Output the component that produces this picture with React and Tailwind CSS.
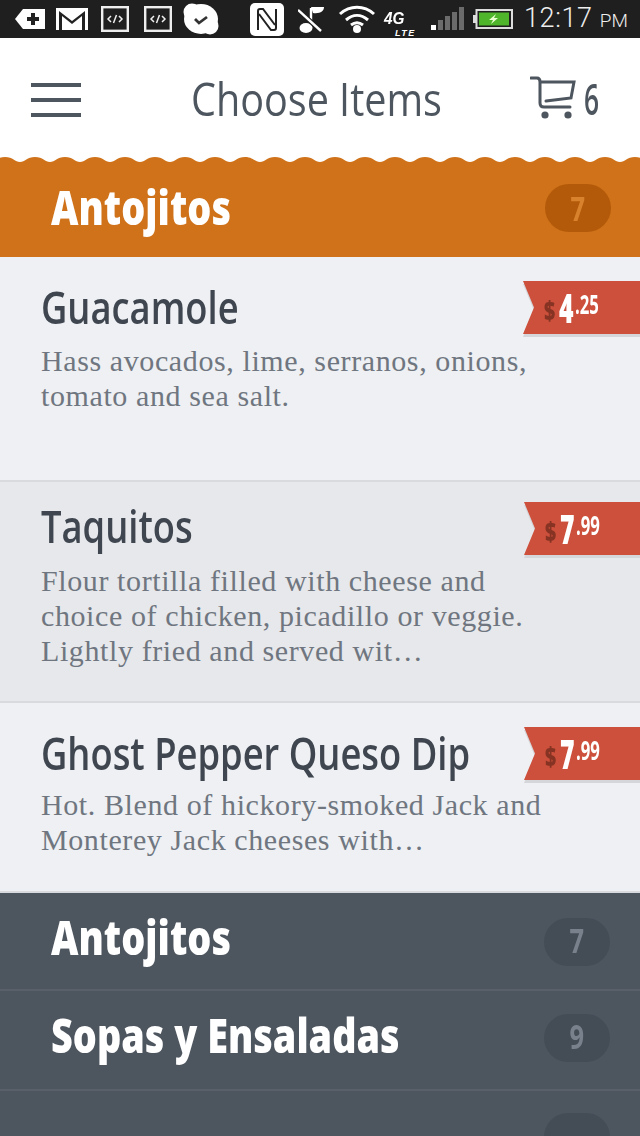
import React from 'react';

// scalloped top edge of the open category, one crest every 30px
const WAVE = 'M-25 0 ' + Array.from({ length: 23 }, (_, i) => {
  const x = i * 30 - 25;
  return `C${x + 8} 0 ${x + 10} 5 ${x + 15} 5 S${x + 22} 0 ${x + 30} 0`;
}).join(' ') + ' V6 H-25 Z';

const CodeBox = ({ className }) => (
  <svg width="28" height="26" viewBox="0 0 28 26" className={className}>
    <rect x="1.2" y="1.2" width="25.6" height="23.6" fill="none" stroke="#eee" strokeWidth="2.4" />
    <path d="M10 10 L7 13 L10 16 M18 10 L21 13 L18 16 M15.5 9 L12.5 17" fill="none" stroke="#eee" strokeWidth="1.5" />
  </svg>
);

const StatusIcons = () => (
  <div className="flex h-full items-center">
    <svg width="32" height="24" viewBox="0 0 32 24" className="ml-[14px]">
      <path d="M1 12 L9 2 H31 V22 H9 Z" fill="#fff" />
      <path d="M17 6 h4 v4 h4 v4 h-4 v4 h-4 v-4 h-4 v-4 h4 z" fill="#222" />
    </svg>
    <svg width="32" height="22" viewBox="0 0 32 22" className="ml-[10px]">
      <rect x="0" y="0" width="32" height="22" fill="#fff" />
      <path d="M3 22 V3 L16 13 L29 3 V22 H26 V8 L16 16 L6 8 V22 Z" fill="#222" />
    </svg>
    <CodeBox className="ml-[13px]" />
    <CodeBox className="ml-[15px]" />
    <svg width="36" height="32" viewBox="0 0 36 32" className="ml-[11px]">
      <ellipse cx="18" cy="16" rx="17" ry="15" fill="#fff" />
      <circle cx="9" cy="9" r="8.5" fill="#fff" />
      <circle cx="27" cy="23" r="8.5" fill="#fff" />
      <path d="M12 16 L16 20 L24 14" fill="none" stroke="#333" strokeWidth="2.8" />
    </svg>
    <svg width="34" height="33" viewBox="0 0 34 33" className="ml-[31px]">
      <rect x="0" y="0" width="34" height="33" rx="5" fill="#fff" />
      <path d="M8 27 V8 Q8 6 10 6 H13 L25 22" fill="none" stroke="#222" strokeWidth="2" />
      <path d="M26 6 V25 Q26 27 24 27 H21 L9 11" fill="none" stroke="#222" strokeWidth="2" />
    </svg>
    <svg width="28" height="27" viewBox="0 0 28 27" className="ml-[14px]">
      <path d="M13 2 V22" stroke="#fff" strokeWidth="2.4" />
      <path d="M13 1 H26 C26 5 22 8 15 7 Z" fill="#fff" />
      <ellipse cx="8" cy="22" rx="6.5" ry="5" fill="#fff" />
      <path d="M0 4 L23 25" stroke="#1f1f1f" strokeWidth="5" />
      <path d="M0 4 L23 25" stroke="#fff" strokeWidth="2.4" />
    </svg>
    <svg width="38" height="28" viewBox="0 0 38 28" className="ml-[12px]">
      <path d="M2 9 C12 0 26 0 36 9 M8 15 C15 9 23 9 30 15 M13 20 C17 17 21 17 25 20" fill="none" stroke="#fff" strokeWidth="3" />
      <circle cx="19" cy="24" r="4" fill="#fff" />
    </svg>
    <div className="relative ml-[8px] h-[38px] w-[36px] font-['Liberation_Sans',sans-serif] font-bold italic text-white">
      <span className="absolute left-0 top-[10px] origin-left scale-x-[0.9] text-[17px] leading-[17px]">4G</span>
      <span className="absolute left-[11px] top-[29px] text-[9px] leading-[8px] tracking-[1.5px]">LTE</span>
    </div>
    <svg width="34" height="24" viewBox="0 0 34 24" className="ml-[11px]">
      <rect x="0" y="18" width="5" height="5" fill="#fff" />
      <rect x="7" y="13" width="5" height="10" fill="#6b6b6b" />
      <rect x="14" y="9" width="5" height="14" fill="#6b6b6b" />
      <rect x="21" y="5" width="5" height="18" fill="#6b6b6b" />
      <rect x="28" y="0" width="5" height="23" fill="#6b6b6b" />
    </svg>
    <svg width="40" height="20" viewBox="0 0 40 20" className="ml-[8px]">
      <rect x="0" y="6" width="3" height="8" fill="#ddd" />
      <rect x="3.5" y="1" width="35.5" height="18" fill="none" stroke="#ddd" strokeWidth="2" />
      <rect x="6" y="3.5" width="30" height="13" fill="#4fb52a" />
      <path d="M23 5 L16 11 H20 L18 15 L25 9 H21 Z" fill="#e9ffd0" />
    </svg>
    <div className="ml-[11px] whitespace-nowrap font-['Roboto',sans-serif] text-[27px] font-light leading-[38px] tracking-[0.6px] text-[#eeeeee]">
      12:17 <span className="text-[19px] tracking-normal">PM</span>
    </div>
  </div>
);

const CartIcon = () => (
  <svg width="46" height="44" viewBox="0 0 46 44" fill="none" stroke="#4d555f" strokeLinecap="round">
    <path d="M1 2 H7 C9 2 10 4 10 6 V27 C10 29 11 31 14 31 H40" strokeWidth="3" />
    <path d="M11 6 H44 L41 22 L16 25" strokeWidth="3" />
    <circle cx="15" cy="39" r="3.6" fill="#4d555f" stroke="none" />
    <circle cx="38" cy="39" r="3.6" fill="#4d555f" stroke="none" />
  </svg>
);

const Price = ({ dollars, cents, className }) => (
  <div className={`absolute right-0 drop-shadow-[0_3px_0_#d5d6d9] ${className}`}>
    <div className="flex h-[53px] items-center bg-[#cc503b] pl-[21px] [clip-path:polygon(0_0,100%_0,100%_100%,0_100%,11px_50%)]">
      <span className="mt-[3px] inline-block w-[15px] origin-left scale-x-[0.72] font-['Open_Sans',sans-serif] text-[27px] font-extrabold leading-none text-[#873324]">$</span>
      <span className="inline-block w-[16px] origin-left scale-x-[0.62] font-['Open_Sans',sans-serif] text-[40px] font-extrabold leading-none text-white">{dollars}</span>
      <span className="-mt-[9px] inline-block origin-left scale-x-[0.62] font-['Open_Sans',sans-serif] text-[27px] font-bold leading-none text-white">.{cents}</span>
    </div>
  </div>
);

const Item = ({ title, lines, dollars, cents, priceClass, className, titleClass, bodyClass }) => (
  <div className={`relative border-b-2 border-[#d9dadd] pl-[41px] ${className}`}>
    <div className={`origin-left scale-x-[0.79] whitespace-nowrap font-['Open_Sans',sans-serif] text-[46px] font-semibold leading-[56px] text-[#3f4650] ${titleClass}`}>
      {title}
    </div>
    <div className={`font-['Liberation_Serif',serif] text-[30px] leading-[35px] tracking-[0.6px] text-[#6f7680] ${bodyClass}`}>
      {lines.map((l) => (
        <div key={l} className="whitespace-nowrap">{l}</div>
      ))}
    </div>
    <Price dollars={dollars} cents={cents} className={priceClass} />
  </div>
);

const CategoryRow = ({ name, count, className, nameClass, badgeClass }) => (
  <div className={`flex items-start justify-between border-b-2 border-[#596069] bg-[#4d555f] pl-[51px] pr-[30px] ${className}`}>
    <span className={`origin-left scale-x-[0.805] whitespace-nowrap font-['Open_Sans',sans-serif] text-[47px] font-extrabold leading-none text-white ${nameClass}`}>{name}</span>
    <span className={`flex h-[48px] w-[66px] items-center justify-center rounded-[24px] bg-[#444c56] pb-[3px] font-['Open_Sans',sans-serif] text-[34px] font-bold text-[#78818c] ${badgeClass}`}>
      <span className="inline-block scale-x-[0.75]">{count}</span>
    </span>
  </div>
);

export default function App() {
  return (
    <div className="h-[1136px] w-[640px] overflow-hidden bg-white">
      <div className="h-[38px] bg-[#1f1f1f]">
        <StatusIcons />
      </div>

      <div className="flex h-[119px] items-center pl-[31px]">
        <div className="flex w-[50px] flex-col gap-[11px] pt-[4px]">
          <div className="h-[4px] bg-[#4d555f]" />
          <div className="h-[4px] bg-[#4d555f]" />
          <div className="h-[4px] bg-[#4d555f]" />
        </div>
        <div className="ml-[110px] w-[339px] origin-left scale-x-[0.86] whitespace-nowrap font-['Open_Sans',sans-serif] text-[46px] font-normal leading-none text-[#4d555f]">
          Choose Items
        </div>
        <div className="flex items-center gap-[8px]">
          <CartIcon />
          <span className="inline-block w-[16px] origin-left scale-x-[0.6] font-['Open_Sans',sans-serif] text-[44px] font-semibold leading-none text-[#4d555f]">6</span>
        </div>
      </div>

      <svg width="640" height="6" viewBox="0 0 640 6" className="block">
        <path d={WAVE} fill="#cf7219" />
      </svg>
      <div className="flex h-[94px] items-start justify-between bg-[#cf7219] pl-[51px] pr-[29px]">
        <span className="mt-[21px] origin-left scale-x-[0.805] whitespace-nowrap font-['Open_Sans',sans-serif] text-[47px] font-extrabold leading-none text-white">Antojitos</span>
        <span className="mt-[21px] flex h-[48px] w-[66px] items-center justify-center rounded-[24px] bg-[#b35a0a] font-['Open_Sans',sans-serif] text-[34px] font-bold text-[#d9822d]">
          <span className="inline-block scale-x-[0.75]">7</span>
        </span>
      </div>

      <Item
        className="h-[225px] bg-[#eef0f3]"
        title="Guacamole"
        titleClass="pt-[21px]"
        bodyClass="mt-[9px]"
        lines={['Hass avocados, lime, serranos, onions,', 'tomato and sea salt.']}
        dollars="4"
        cents="25"
        priceClass="top-[24px] w-[117px]"
      />
      <Item
        className="h-[221px] bg-[#e7e8eb]"
        title="Taquitos"
        titleClass="pt-[15px]"
        bodyClass="mt-[10px]"
        lines={['Flour tortilla filled with cheese and', 'choice of chicken, picadillo or veggie.', 'Lightly fried and served wit…']}
        dollars="7"
        cents="99"
        priceClass="top-[20px] w-[116px]"
      />
      <Item
        className="h-[190px] bg-[#eef0f3]"
        title="Ghost Pepper Queso Dip"
        titleClass="pt-[21px]"
        bodyClass="mt-[7px]"
        lines={['Hot. Blend of hickory-smoked Jack and', 'Monterey Jack cheeses with…']}
        dollars="7"
        cents="99"
        priceClass="top-[24px] w-[116px]"
      />

      <CategoryRow name="Antojitos" count="7" className="h-[98px]" nameClass="mt-[21px]" badgeClass="mt-[25px]" />
      <CategoryRow name="Sopas y Ensaladas" count="9" className="h-[100px]" nameClass="mt-[21px]" badgeClass="mt-[23px]" />
      <div className="flex h-[60px] justify-end bg-[#4d555f] pr-[30px] pt-[22px]">
        <span className="h-[48px] w-[66px] rounded-[24px] bg-[#444c56]" />
      </div>
    </div>
  );
}
